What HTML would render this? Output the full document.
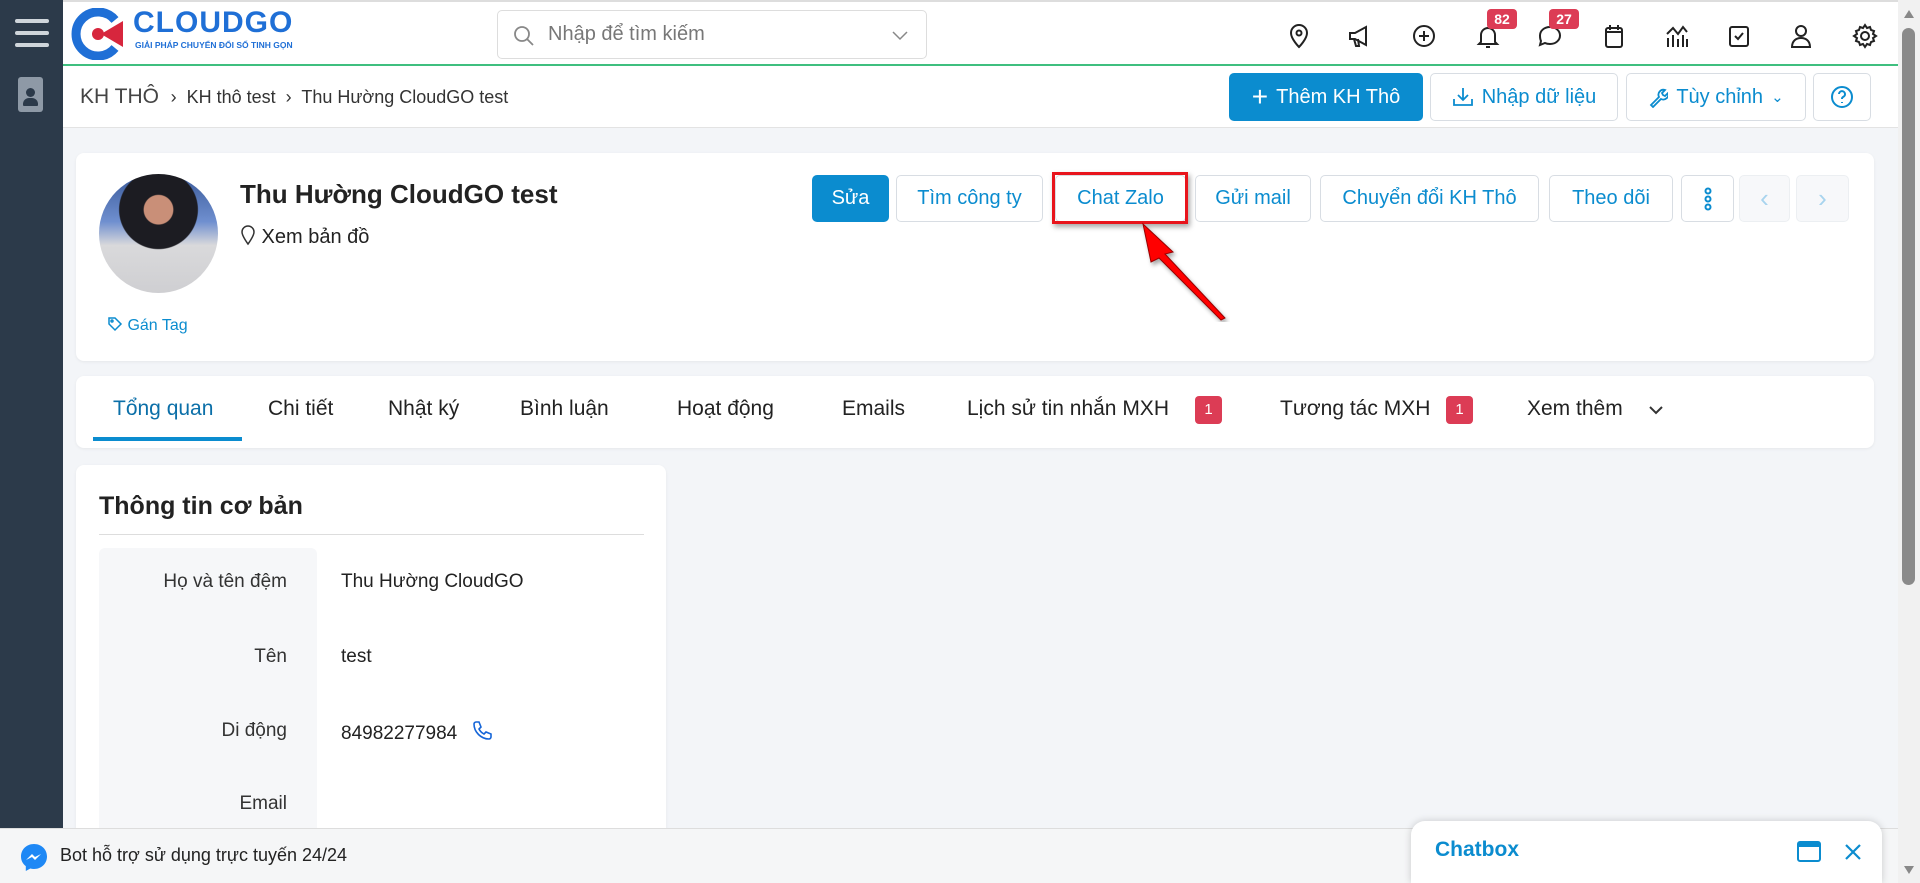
<!DOCTYPE html>
<html><head><meta charset="utf-8"><style>
*{box-sizing:border-box;margin:0;padding:0}
html,body{width:1920px;height:883px;overflow:hidden}
body{background:#f3f5f8;font-family:"Liberation Sans","DejaVu Sans",sans-serif;color:#222;position:relative}
.abs{position:absolute}
.side{left:0;top:0;width:63px;height:883px;background:#2c3a4a}
.top{left:63px;top:0;width:1835px;height:66px;background:#fff;border-top:2px solid #ddd;border-bottom:2px solid #3fbf7f}
.bc{left:63px;top:66px;width:1835px;height:62px;background:#fff;border-bottom:1px solid #e3e3e3}
.card{background:#fff;border-radius:8px;box-shadow:0 1px 3px rgba(0,0,0,.06)}
.btn{position:absolute;top:175px;height:47px;border:1px solid #d8dde3;border-radius:5px;background:#fff;color:#0b8ccf;font-size:20px;display:flex;align-items:center;justify-content:center}
.tbtn{position:absolute;top:73px;height:48px;border:1px solid #d8dde3;border-radius:5px;background:#fff;color:#0b8ccf;font-size:20px;display:flex;align-items:center;justify-content:center;gap:8px}
.tab{position:absolute;top:397px;font-size:21px;color:#222}
.badge{position:absolute;top:396px;width:27px;height:28px;background:#dc3c55;color:#fff;border-radius:4px;font-size:15px;text-align:center;line-height:28px}
.ic{position:absolute;top:22px;width:28px;height:28px}
.lbl{position:absolute;right:0;width:218px;text-align:right;font-size:19px;color:#333}
.val{position:absolute;left:341px;font-size:19px;color:#222}
</style></head><body>
<div class="abs side">
 <div class="abs" style="left:15px;top:19px;width:34px;height:4px;background:#cfd5db;border-radius:2px"></div>
 <div class="abs" style="left:15px;top:31px;width:34px;height:4px;background:#cfd5db;border-radius:2px"></div>
 <div class="abs" style="left:15px;top:43px;width:34px;height:4px;background:#cfd5db;border-radius:2px"></div>
 <div class="abs" style="left:18px;top:77px;width:25px;height:35px;background:#8e99a6;border-radius:3px"></div>
 <div class="abs" style="left:26px;top:88px;width:9px;height:9px;background:#2c3a4a;border-radius:50%"></div>
 <div class="abs" style="left:23px;top:98px;width:15px;height:8px;background:#2c3a4a;border-radius:6px 6px 1px 1px"></div>
</div>
<div class="abs top">
 <svg class="abs" style="left:8px;top:6px" width="56" height="52" viewBox="0 0 56 52"><path d="M44 12 A22 22 0 1 0 44 40" fill="none" stroke="#1f6fd6" stroke-width="9"/><circle cx="27" cy="26" r="6" fill="#d7263d"/><path d="M30 26 L52 13 L52 39 Z" fill="#d7263d"/></svg>
 <div class="abs" style="left:70px;top:4px;font-size:30px;font-weight:bold;color:#1f6fd6;letter-spacing:1px">CLOUDGO</div>
 <div class="abs" style="left:72px;top:38px;font-size:8.5px;font-weight:bold;color:#1f6fd6">GIẢI PHÁP CHUYỂN ĐỔI SỐ TINH GỌN</div>
 <div class="abs" style="left:434px;top:8px;width:430px;height:49px;border:1px solid #ddd;border-radius:5px">
  <svg class="abs" style="left:14px;top:13px" width="24" height="24" viewBox="0 0 24 24"><circle cx="10" cy="10" r="7" fill="none" stroke="#888" stroke-width="1.8"/><path d="M15 15l6 6" stroke="#888" stroke-width="1.8"/></svg>
  <div class="abs" style="left:50px;top:12px;font-size:20px;color:#777">Nhập để tìm kiếm</div>
  <svg class="abs" style="left:392px;top:16px" width="20" height="16"><path d="M3 5l7 7 7-7" fill="none" stroke="#888" stroke-width="1.5"/></svg>
 </div>
</div>
<svg class="ic" style="left:1285px" viewBox="0 0 28 28" fill="none" stroke="#222" stroke-width="2"><path d="M14 25s-8-8-8-14a8 8 0 0 1 16 0c0 6-8 14-8 14z"/><circle cx="14" cy="11" r="2.5"/></svg>
<svg class="ic" style="left:1346px" viewBox="0 0 28 28" fill="none" stroke="#222" stroke-width="2"><path d="M4 11h5l11-6v18l-11-6H4z"/><path d="M8 17l2 7h3l-1-7"/></svg>
<svg class="ic" style="left:1410px" viewBox="0 0 28 28" fill="none" stroke="#222" stroke-width="2"><circle cx="14" cy="14" r="10"/><path d="M14 9v10M9 14h10"/></svg>
<svg class="ic" style="left:1474px" viewBox="0 0 28 28" fill="none" stroke="#222" stroke-width="2"><path d="M7 20V13a7 7 0 0 1 14 0v7l2 2H5z"/><path d="M12 25h4"/></svg>
<svg class="ic" style="left:1536px" viewBox="0 0 28 28" fill="none" stroke="#222" stroke-width="2"><path d="M14 5c6 0 10 4 10 8.5S20 22 14 22c-2 0-3 0-5-1l-5 2 1-4c-1-2-1-3-1-5.5C4 9 8 5 14 5z"/></svg>
<svg class="ic" style="left:1600px" viewBox="0 0 28 28" fill="none" stroke="#222" stroke-width="2"><rect x="6" y="6" width="16" height="19" rx="2"/><path d="M6 10h16M10 3v5M18 3v5"/></svg>
<svg class="ic" style="left:1663px" viewBox="0 0 28 28" fill="none" stroke="#222" stroke-width="2"><path d="M5 25v-9M10 25v-12M15 25v-8M20 25v-12M24 25v-8M4 12l6-6 5 6 5-7 4 5"/></svg>
<svg class="ic" style="left:1725px" viewBox="0 0 28 28" fill="none" stroke="#222" stroke-width="2"><rect x="5" y="5" width="18" height="19" rx="2"/><path d="M10 14l3 3 5-6"/></svg>
<svg class="ic" style="left:1787px" viewBox="0 0 28 28" fill="none" stroke="#222" stroke-width="2"><circle cx="14" cy="9" r="5"/><path d="M5 25c0-6 4-9 9-9s9 3 9 9z"/></svg>
<svg class="ic" style="left:1851px" viewBox="0 0 28 28" fill="none" stroke="#222" stroke-width="2"><circle cx="14" cy="14" r="4"/><path d="M14 3l2 3 3-1 1 3 3 1-1 3 3 2-3 2 1 3-3 1-1 3-3-1-2 3-2-3-3 1-1-3-3-1 1-3-3-2 3-2-1-3 3-1 1-3 3 1z"/></svg>
<div class="abs" style="left:1487px;top:9px;width:30px;height:20px;background:#dc3c55;color:#fff;border-radius:4px;font-size:14px;font-weight:bold;text-align:center;line-height:20px">82</div>
<div class="abs" style="left:1549px;top:9px;width:30px;height:20px;background:#dc3c55;color:#fff;border-radius:4px;font-size:14px;font-weight:bold;text-align:center;line-height:20px">27</div>

<div class="abs bc">
 <div class="abs" style="left:17px;top:19px;font-size:21px;color:#444">KH THÔ&nbsp; <span style="font-size:18px;color:#333">›&nbsp; KH thô test&nbsp; ›&nbsp; Thu Hường CloudGO test</span></div>
</div>
<div class="tbtn" style="left:1229px;width:194px;background:#0b8ccf;border-color:#0b8ccf;color:#fff"><span style="font-size:28px;font-weight:300">+</span>Thêm KH Thô</div>
<div class="tbtn" style="left:1430px;width:188px"><svg width="22" height="22" viewBox="0 0 22 22" fill="none" stroke="#0b8ccf" stroke-width="1.8"><path d="M11 2v11M6 9l5 5 5-5M2 13v6h18v-6"/></svg>Nhập dữ liệu</div>
<div class="tbtn" style="left:1626px;width:180px"><svg width="20" height="22" viewBox="0 0 20 22" fill="none" stroke="#0b8ccf" stroke-width="1.8"><path d="M3 19l8-8a5 5 0 0 1 6-7l-3 3 1 2 2 1 3-3a5 5 0 0 1-7 6l-8 8z"/></svg>Tùy chỉnh <span style="font-size:15px">⌄</span></div>
<div class="tbtn" style="left:1813px;width:58px"><svg width="24" height="24" viewBox="0 0 24 24" fill="none" stroke="#0b8ccf" stroke-width="2"><circle cx="12" cy="12" r="10"/><path d="M9 9a3 3 0 1 1 4 3c-1 .5-1 1-1 2M12 17v1"/></svg></div>

<div class="abs card" style="left:76px;top:153px;width:1798px;height:208px"></div>
<div class="abs" style="left:99px;top:174px;width:119px;height:119px;border-radius:50%;background:radial-gradient(circle at 50% 30%,#c98f78 0 14%,#1c1c22 15% 38%,transparent 39%),linear-gradient(180deg,#3a5a9a 0,#6f8fcf 40%,#d9d9db 60%,#cfcfd2 100%);overflow:hidden"></div>
<div class="abs" style="left:240px;top:179px;font-size:26px;font-weight:bold;color:#222">Thu Hường CloudGO test</div>
<div class="abs" style="left:240px;top:224px;font-size:20px;color:#222"><svg width="16" height="22" viewBox="0 0 16 22" fill="none" stroke="#333" stroke-width="1.5" style="vertical-align:-3px"><path d="M8 20S2 12 2 8a6 6 0 0 1 12 0c0 4-6 12-6 12z"/></svg> Xem bản đồ</div>
<div class="abs" style="left:107px;top:316px;font-size:16px;color:#0b8ccf"><svg width="16" height="16" viewBox="0 0 16 16" fill="none" stroke="#0b8ccf" stroke-width="1.5" style="vertical-align:-2px"><path d="M2 2h6l6 6-6 6-6-6z"/><circle cx="5" cy="5" r="1"/></svg> Gán Tag</div>

<div class="btn" style="left:812px;width:77px;background:#0b8ccf;border-color:#0b8ccf;color:#fff">Sửa</div>
<div class="btn" style="left:896px;width:147px">Tìm công ty</div>
<div class="btn" style="left:1055px;width:131px">Chat Zalo</div>
<div class="abs" style="left:1052px;top:172px;width:136px;height:52px;border:3px solid #e8141c;box-shadow:2px 3px 5px rgba(0,0,0,.35)"></div>
<div class="btn" style="left:1195px;width:116px">Gửi mail</div>
<div class="btn" style="left:1320px;width:219px">Chuyển đổi KH Thô</div>
<div class="btn" style="left:1549px;width:124px">Theo dõi</div>
<div class="btn" style="left:1681px;width:53px"><svg width="10" height="26" viewBox="0 0 10 26" fill="none" stroke="#0b8ccf" stroke-width="2"><circle cx="5" cy="5" r="2.5"/><circle cx="5" cy="13" r="2.5"/><circle cx="5" cy="21" r="2.5"/></svg></div>
<div class="btn" style="left:1739px;width:51px;background:#f7f8fa;color:#a8d4ee;border-color:#eceff2;font-size:26px">‹</div>
<div class="btn" style="left:1796px;width:53px;background:#f7f8fa;color:#a8d4ee;border-color:#eceff2;font-size:26px">›</div>
<svg class="abs" style="left:1135px;top:222px" width="95" height="100" viewBox="0 0 95 100"><path d="M8 2 L38 30 L30 32 L90 96 L86 98 L24 36 L16 40 Z" fill="#f00" stroke="#900" stroke-width="1" style="filter:drop-shadow(2px 3px 2px rgba(0,0,0,.35))"/></svg>

<div class="abs card" style="left:76px;top:376px;width:1798px;height:72px"></div>
<div class="tab" style="left:113px;color:#0b6fa8">Tổng quan</div>
<div class="abs" style="left:93px;top:437px;width:149px;height:4px;background:#0b8ccf"></div>
<div class="tab" style="left:268px">Chi tiết</div>
<div class="tab" style="left:388px">Nhật ký</div>
<div class="tab" style="left:520px">Bình luận</div>
<div class="tab" style="left:677px">Hoạt động</div>
<div class="tab" style="left:842px">Emails</div>
<div class="tab" style="left:967px">Lịch sử tin nhắn MXH</div>
<div class="badge" style="left:1195px">1</div>
<div class="tab" style="left:1280px">Tương tác MXH</div>
<div class="badge" style="left:1446px">1</div>
<div class="tab" style="left:1527px">Xem thêm</div>
<svg class="abs" style="left:1647px;top:403px" width="18" height="14"><path d="M3 4l6 6 6-6" fill="none" stroke="#333" stroke-width="2"/></svg>

<div class="abs card" style="left:76px;top:465px;width:590px;height:418px">
 <div class="abs" style="left:23px;top:27px;font-size:25px;font-weight:bold;color:#222">Thông tin cơ bản</div>
 <div class="abs" style="left:23px;top:69px;width:545px;height:1px;background:#ddd"></div>
 <div class="abs" style="left:23px;top:83px;width:218px;height:335px;background:#f6f7f9;border-radius:6px">
  <div class="lbl" style="top:23px;right:30px">Họ và tên đệm</div>
  <div class="lbl" style="top:98px;right:30px">Tên</div>
  <div class="lbl" style="top:172px;right:30px">Di động</div>
  <div class="lbl" style="top:245px;right:30px">Email</div>
 </div>
 <div class="val" style="top:106px;left:265px">Thu Hường CloudGO</div>
 <div class="val" style="top:181px;left:265px">test</div>
 <div class="val" style="top:255px;left:265px">84982277984 <svg width="22" height="22" viewBox="0 0 22 22" fill="none" stroke="#1565d8" stroke-width="1.6" style="vertical-align:-3px;margin-left:8px"><path d="M5 2l3 0 2 5-2 2c1 2 3 4 5 5l2-2 5 2v3c0 1-1 2-2 2C10 19 3 12 3 4c0-1 1-2 2-2z"/></svg></div>
</div>

<div class="abs" style="left:0;top:828px;width:1898px;height:55px;background:#f5f6f7;border-top:1px solid #ddd">
 <svg class="abs" style="left:19px;top:13px" width="30" height="30" viewBox="0 0 30 30"><path d="M15 2C7.5 2 2 7.5 2 14.5c0 4 1.8 7.4 4.8 9.6V29l4.5-2.5c1.2.3 2.4.5 3.7.5 7.5 0 13-5.5 13-12.5S22.5 2 15 2z" fill="#1e88f5"/><path d="M7 18l6-6 3 3 6-3-6 6-3-3z" fill="#fff"/></svg>
 <div class="abs" style="left:60px;top:16px;font-size:18px;color:#222">Bot hỗ trợ sử dụng trực tuyến 24/24</div>
</div>
<div class="abs" style="left:1411px;top:821px;width:471px;height:62px;background:#fff;border-radius:14px 14px 0 0;box-shadow:0 0 8px rgba(0,0,0,.18)">
 <div class="abs" style="left:24px;top:17px;font-size:21px;font-weight:bold;color:#0b8ccf">Chatbox</div>
 <div class="abs" style="left:386px;top:20px;width:24px;height:21px;border:2.5px solid #0b8ccf;border-top-width:6px;border-radius:3px"></div>
 <svg class="abs" style="left:432px;top:21px" width="20" height="20"><path d="M3 3l14 14M17 3L3 17" stroke="#0b8ccf" stroke-width="2.2"/></svg>
</div>
<div class="abs" style="left:1898px;top:0;width:22px;height:883px;background:#f1f1f1">
 <div class="abs" style="left:4px;top:28px;width:13px;height:557px;background:#8a8a8a;border-radius:7px"></div>
 <div class="abs" style="left:6px;top:10px;width:0;height:0;border-left:5px solid transparent;border-right:5px solid transparent;border-bottom:8px solid #888"></div>
 <div class="abs" style="left:6px;top:866px;width:0;height:0;border-left:5px solid transparent;border-right:5px solid transparent;border-top:8px solid #888"></div>
</div>
</body></html>
